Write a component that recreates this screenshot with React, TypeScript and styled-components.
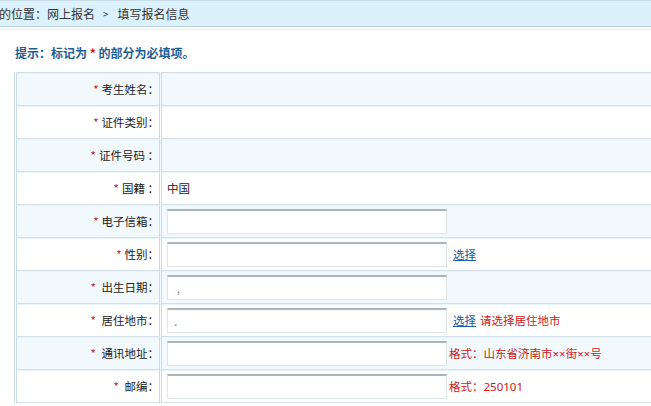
import React from 'react';
import styled, { createGlobalStyle } from 'styled-components';

const GlobalStyle = createGlobalStyle`
	body {
		margin: 0;
		background: #fff;
		font-family: "Noto Sans CJK SC", "Noto Sans", sans-serif;
		font-size: 12px;
		color: #222;
		overflow: hidden;
	}
`;

const Breadcrumb = styled.div`
	height: 25px;
	display: flex;
	align-items: center;
	background: #dbf1fb;
	border-top: 1px solid #c9dde6;
	border-bottom: 1px solid #b8cfd8;
	font-size: 12px;
	color: #333;
	white-space: nowrap;
	margin-left: -1px;

	.sep {
		margin: 0 9px 0 8px;
		font-size: 10px;
	}
`;

const Divider = styled.div`
	height: 1px;
	margin-top: 2px;
	background: #e8eef1;
`;

const Tip = styled.div`
	margin: 14px 0 0 15px;
	height: 18px;
	line-height: 18px;
	font-weight: bold;
	color: #1f5e93;

	em {
		font-style: normal;
		color: #d01818;
	}
`;

const Table = styled.table`
	margin: 10px 0 0 14px;
	width: 660px;
	border-collapse: collapse;
	border-left: 3px double #c8dbe6;
	border-top: 1px solid #cfdde5;
	font-size: 11.5px;
`;

const Row = styled.tr<{ $alt?: boolean }>`
	height: 33px;
	background: ${(p) => (p.$alt ? '#f2f9fd' : '#ffffff')};
	border-bottom: 1px solid #d3e0e8;
	box-shadow: inset 0 1px 0 #eaf5fb;
`;

const Label = styled.td`
	width: 142px;
	padding: 0;
	text-align: right;
	white-space: nowrap;
	color: #222;
	border-right: 3px double #c8dbe6;

	.req {
		color: #b81c1c;
		margin-right: 3px;
	}
`;

const Value = styled.td`
	padding: 0 0 0 5px;
	white-space: nowrap;
`;

const Input = styled.input`
	box-sizing: border-box;
	width: 280px;
	height: 25px;
	margin: 0;
	padding: 0 6px;
	vertical-align: middle;
	border: 1px solid #dfe6ea;
	border-top: 2px solid #a9b5bd;
	background: #fff;
	font-family: inherit;
	font-size: 12px;
	color: #888;
	outline: none;
`;

const Link = styled.a`
	margin-left: 6px;
	color: #1a5ea0;
	text-decoration: underline;
	vertical-align: middle;
	cursor: pointer;
`;

const Hint = styled.span<{ $gap?: number }>`
	margin-left: ${(p) => p.$gap ?? 2}px;
	font-family: "Noto Sans", "Noto Sans CJK SC", sans-serif;
	color: #d01818;
	vertical-align: middle;
`;

type Field = {
	label: string;
	spaced?: boolean;
	padColon?: boolean;
	text?: string;
	input?: boolean;
	value?: string;
	link?: boolean;
	hint?: string;
};

const fields: Field[] = [
	{ label: '考生姓名' },
	{ label: '证件类别' },
	{ label: '证件号码', padColon: true },
	{ label: '国籍', padColon: true, text: '中国' },
	{ label: '电子信箱', input: true },
	{ label: '性别', input: true, link: true },
	{ label: '出生日期', spaced: true, input: true, value: ' ,' },
	{ label: '居住地市', spaced: true, input: true, value: '.', link: true, hint: '请选择居住地市' },
	{ label: '通讯地址', spaced: true, input: true, hint: '格式：山东省济南市××街××号' },
	{ label: '邮编', spaced: true, input: true, hint: '格式：250101' },
];

const App = () => {
	return (
		<>
			<GlobalStyle />
			<Breadcrumb>
				的位置：网上报名<span className="sep">&gt;</span>填写报名信息
			</Breadcrumb>
			<Divider />
			<Tip>
				提示：标记为 <em>*</em> 的部分为必填项。
			</Tip>
			<Table>
				<tbody>
					{fields.map((f, i) => (
						<Row key={f.label} $alt={i % 2 === 0}>
							<Label>
								<span className="req">*</span>
								{f.spaced ? ' ' : ''}
								{f.label}
								{f.padColon ? ' ' : ''}：
							</Label>
							<Value>
								{f.text}
								{f.input && <Input defaultValue={f.value ?? ''} readOnly />}
								{f.link && <Link>选择</Link>}
								{f.hint && <Hint $gap={f.link ? 4 : 2}>{f.hint}</Hint>}
							</Value>
						</Row>
					))}
				</tbody>
			</Table>
		</>
	);
};

export default App;
